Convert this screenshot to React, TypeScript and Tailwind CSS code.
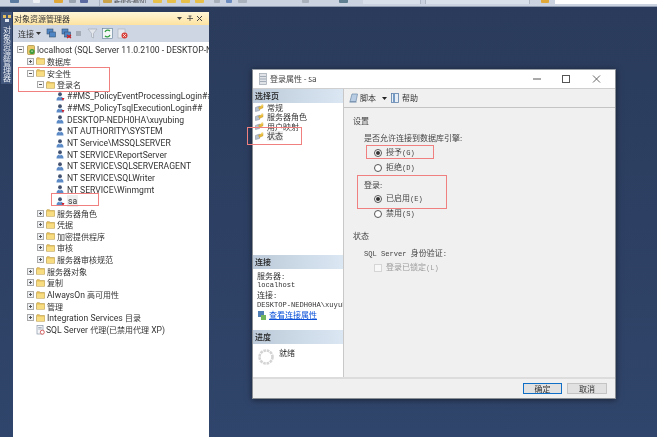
import React from "react";

const cjk = /([\u3000-\u9fff\uff00-\uffef]+)/;

function T({ text, latin, han }: { text: string; latin: string; han: string }) {
  return (
    <>
      {text.split(cjk).map((part, i) =>
        part === "" ? null : (
          <span key={i} className={cjk.test(part) ? han : latin}>
            {part}
          </span>
        )
      )}
    </>
  );
}

const TreeText = ({ text }: { text: string }) => (
  <T text={text} latin="font-['Roboto'] text-[8.6px]" han="font-['Noto_Sans_CJK_SC'] text-[8px]" />
);
const DlgText = ({ text }: { text: string }) => (
  <span className="text-[8px] leading-[8.5px]">
    <T text={text} latin="font-['Liberation_Mono'] text-[7.1px]" han="font-['Noto_Sans_CJK_SC'] text-[8px]" />
  </span>
);

function Expander({ open }: { open?: boolean }) {
  return (
    <svg width="7" height="7" viewBox="0 0 7 7" className="shrink-0">
      <rect x="0.5" y="0.5" width="6" height="6" fill={open ? "#fafafa" : "#eef1f6"} stroke="#a9a9a9" />
      <path d={open ? "M2 3.5h3" : "M2 3.5h3M3.5 2v3"} stroke="#555" strokeWidth="1" />
    </svg>
  );
}

function Folder() {
  return (
    <svg width="9" height="8" viewBox="0 0 9 8" className="shrink-0">
      <path d="M0.5 1.5L1 0.7h2.5l.7 .8h4.3v5.8H0.5z" fill="#e8c25a" stroke="#b89a4a" strokeWidth="0.6" />
      <rect x="1" y="2.6" width="7.2" height="4.4" fill="#f7dc82" />
    </svg>
  );
}

function User({ warn }: { warn?: boolean }) {
  return (
    <svg width="9" height="9" viewBox="0 0 9 9" className="shrink-0">
      <circle cx="4" cy="2.2" r="1.9" fill="#40506e" />
      <path d="M0.5 8.5c0-3 1.5-4 3.5-4s3.5 1 3.5 4z" fill="#5b8ac6" />
      <path d="M3.2 4.6L4 6l.8-1.4z" fill="#e8eef8" />
      {warn && <path d="M5.5 6h3L7 8.8z" fill="#d0202a" />}
    </svg>
  );
}

function ServerIcon() {
  return (
    <svg width="10" height="10" viewBox="0 0 10 10" className="shrink-0">
      <rect x="1.5" y="0.5" width="7" height="9" rx="1" fill="#e9c86a" stroke="#a58a3c" strokeWidth="0.7" />
      <circle cx="6" cy="6.5" r="2.6" fill="#3f9d3c" />
      <path d="M5 6.5l1-1.2 1 1.2z" fill="#fff" />
    </svg>
  );
}

function AgentIcon() {
  return (
    <svg width="9" height="10" viewBox="0 0 9 10" className="shrink-0">
      <rect x="1" y="0.5" width="6" height="8.5" fill="#f4f6f9" stroke="#8b97a8" strokeWidth="0.7" />
      <path d="M2.2 2.5h3.5M2.2 4h3.5" stroke="#8b97a8" strokeWidth="0.7" />
      <circle cx="6.3" cy="7.2" r="2" fill="#fff" stroke="#d04040" strokeWidth="0.8" />
    </svg>
  );
}

function PageIcon() {
  return (
    <svg width="9" height="8" viewBox="0 0 9 8" className="shrink-0">
      <path d="M0.5 3.5L4.5 2v4.5L0.5 7.5z" fill="#b7c2d0" stroke="#7d8796" strokeWidth="0.5" />
      <path d="M3.5 3.5L8 0.8v3L4.5 5.5z" fill="#e9b93a" stroke="#b78a1e" strokeWidth="0.4" />
      <circle cx="7" cy="1.5" r="1" fill="#f7d870" />
    </svg>
  );
}

type Row = { text: string; level: 0 | 1 | 2 | 3; kind: "server" | "open" | "closed" | "user" | "warn" | "agent" };

const rows: Row[] = [
  { text: "localhost (SQL Server 11.0.2100 - DESKTOP-NEDH0HA\\xuyubing)", level: 0, kind: "server" },
  { text: "数据库", level: 1, kind: "closed" },
  { text: "安全性", level: 1, kind: "open" },
  { text: "登录名", level: 2, kind: "open" },
  { text: "##MS_PolicyEventProcessingLogin##", level: 3, kind: "warn" },
  { text: "##MS_PolicyTsqlExecutionLogin##", level: 3, kind: "warn" },
  { text: "DESKTOP-NEDH0HA\\xuyubing", level: 3, kind: "user" },
  { text: "NT AUTHORITY\\SYSTEM", level: 3, kind: "user" },
  { text: "NT Service\\MSSQLSERVER", level: 3, kind: "user" },
  { text: "NT SERVICE\\ReportServer", level: 3, kind: "user" },
  { text: "NT SERVICE\\SQLSERVERAGENT", level: 3, kind: "user" },
  { text: "NT SERVICE\\SQLWriter", level: 3, kind: "user" },
  { text: "NT SERVICE\\Winmgmt", level: 3, kind: "user" },
  { text: "sa", level: 3, kind: "warn" },
  { text: "服务器角色", level: 2, kind: "closed" },
  { text: "凭据", level: 2, kind: "closed" },
  { text: "加密提供程序", level: 2, kind: "closed" },
  { text: "审核", level: 2, kind: "closed" },
  { text: "服务器审核规范", level: 2, kind: "closed" },
  { text: "服务器对象", level: 1, kind: "closed" },
  { text: "复制", level: 1, kind: "closed" },
  { text: "AlwaysOn 高可用性", level: 1, kind: "closed" },
  { text: "管理", level: 1, kind: "closed" },
  { text: "Integration Services 目录", level: 1, kind: "closed" },
  { text: "SQL Server 代理(已禁用代理 XP)", level: 1, kind: "agent" },
];

const indent = ["pl-[4px]", "pl-[14px]", "pl-[24px]", "pl-[43px]"];

function TreeRow({ row }: { row: Row }) {
  const leaf = row.kind === "user" || row.kind === "warn";
  return (
    <div className={`h-[11.67px] flex items-center whitespace-nowrap text-[#333] text-[9px] leading-[11px] ${indent[row.level]}`}>
      {row.kind === "server" && (
        <div className="flex items-center gap-[2px] mr-[1px]">
          <Expander open />
          <ServerIcon />
        </div>
      )}
      {(row.kind === "open" || row.kind === "closed") && (
        <div className="flex items-center gap-[2px] mr-[2px]">
          <Expander open={row.kind === "open"} />
          <Folder />
        </div>
      )}
      {row.kind === "agent" && (
        <div className="flex items-center ml-[9px] mr-[1px]">
          <AgentIcon />
        </div>
      )}
      {leaf && (
        <div className="mr-[2px]">
          <User warn={row.kind === "warn"} />
        </div>
      )}
      <span className={row.text === "sa" ? "bg-[#eeeeee] px-[1px]" : ""}>
        <TreeText text={row.text} />
      </span>
    </div>
  );
}

function ToolIcon({ color, badge }: { color: string; badge?: string }) {
  return (
    <svg width="11" height="11" viewBox="0 0 11 11">
      <rect x="1" y="1" width="6" height="5" fill={color} stroke="#35506f" strokeWidth="0.6" />
      <rect x="3.5" y="4" width="6" height="5" fill={color} stroke="#35506f" strokeWidth="0.6" />
      {badge && <path d="M6 7l4 3M10 7l-4 3" stroke={badge} strokeWidth="1.4" />}
    </svg>
  );
}

function Radio({ checked }: { checked?: boolean }) {
  return (
    <span className="w-[8px] h-[8px] rounded-full border border-[#555] bg-white flex items-center justify-center shrink-0">
      {checked && <span className="w-[4px] h-[4px] rounded-full bg-[#333]" />}
    </span>
  );
}

function PaneHead({ title }: { title: string }) {
  return (
    <div className="h-[14px] shrink-0 flex items-center pl-[2px] bg-gradient-to-r from-[#bccad9] to-[#dbe7f3] text-[#222] font-['Noto_Sans_CJK_SC'] text-[8px] leading-[10px] font-medium">
      {title}
    </div>
  );
}

function TopIcon({ w, className }: { w: string; className: string }) {
  return <span className={`block h-[3px] rounded-b-[1px] ${w} ${className}`} />;
}

export default function App() {
  return (
    <div className="relative w-[657px] h-[437px] overflow-hidden flex flex-col bg-gradient-to-b from-[#2a3b5b] to-[#30456b] blur-[0.3px]">
      {/* main toolbar clipped at the top */}
      <div className="h-[7px] shrink-0 flex items-start bg-[#cbd3e1] border-b border-[#8e9bb0]">
        <div className="flex items-start gap-[14px] pl-[10px] pt-0">
          <TopIcon w="w-[9px]" className="bg-[#5a7aa0]" />
          <TopIcon w="w-[7px]" className="bg-[#eef1f5]" />
          <TopIcon w="w-[9px]" className="bg-[#e0a838]" />
        </div>
        <div className="flex items-start gap-[4px] ml-[6px]">
          <TopIcon w="w-[7px]" className="bg-[#9aa3b0]" />
          <TopIcon w="w-[8px]" className="bg-[#5a6aa0]" />
        </div>
        <span className="ml-[11px] w-px h-[6px] bg-[#a8b2c2]" />
        <TopIcon w="w-[9px] ml-[3px]" className="bg-[#c9a24a]" />
        <span className="ml-[2px] text-[6px] leading-[3px] h-[3px] overflow-hidden font-['Noto_Sans_CJK_SC'] text-[#444]">新建查询(N)</span>
        <div className="flex items-start gap-[5px] ml-[7px]">
          <TopIcon w="w-[9px]" className="bg-[#e6c04a]" />
          <TopIcon w="w-[9px]" className="bg-[#e6c04a]" />
          <TopIcon w="w-[9px]" className="bg-[#e6c04a]" />
          <TopIcon w="w-[9px]" className="bg-[#e6c04a]" />
        </div>
        <div className="flex items-start gap-[6px] ml-[10px]">
          <TopIcon w="w-[6px]" className="bg-[#a8b0bc]" />
          <TopIcon w="w-[6px]" className="bg-[#6c8cc0]" />
          <TopIcon w="w-[9px]" className="bg-[#aab2be]" />
        </div>
        <div className="flex items-start gap-[30px] ml-[55px]">
          <TopIcon w="w-[7px]" className="bg-[#a8b0bc]" />
          <TopIcon w="w-[9px]" className="bg-[#5f7f90]" />
        </div>
        <div className="w-[58px] h-[4px] bg-[#d9e0ea] border-r border-[#aeb7c6] ml-[15px]" />
        <div className="w-[105px] h-[4px] bg-[#d9e0ea] border-x border-[#aeb7c6] ml-[4px]" />
        <TopIcon w="w-[8px] ml-[11px]" className="bg-[#e0a838]" />
        <div className="flex-1 h-[4px] bg-white ml-[6px]" />
      </div>

      <div className="flex-1 flex min-h-0 pt-[5px]">
        {/* collapsed side tab */}
        <div className="w-[13px] shrink-0 pl-px">
          <div className="w-[11px] h-[72px] bg-[#42557a] flex flex-col items-center pt-[2px]">
            <svg width="10" height="9" viewBox="0 0 10 9" className="shrink-0">
              <path d="M1 1h3v3H1zM6 1h3v3H6z" fill="#e6c060" />
              <path d="M3 5h4v3H3z" fill="#dfe6f0" />
            </svg>
            <span className="mt-[3px] [writing-mode:vertical-rl] text-[#e8edf5] font-['Noto_Sans_CJK_SC'] text-[8px] leading-[10px]">
              对象资源管理器
            </span>
          </div>
        </div>

        {/* object explorer */}
        <div className="w-[196px] shrink-0 flex flex-col bg-white">
          <div className="h-[13px] shrink-0 flex items-center pl-px bg-gradient-to-b from-[#fff6d8] to-[#fde3a0] text-[#333] font-['Noto_Sans_CJK_SC'] text-[8px] leading-[10px]">
            <span className="flex-1">对象资源管理器</span>
            <svg width="28" height="9" viewBox="0 0 28 9" className="mr-[5px] text-[#444]">
              <path d="M1 3h5L3.5 6z" fill="currentColor" />
              <path d="M11 4.5h6M14 2v5M12.5 2h3" stroke="currentColor" strokeWidth="0.8" fill="none" />
              <path d="M21 2l5 5M26 2l-5 5" stroke="currentColor" strokeWidth="1" />
            </svg>
          </div>
          <div className="h-[17px] shrink-0 flex items-center pl-[5px] bg-[#ced6e4] text-[#333]">
            <span className="font-['Noto_Sans_CJK_SC'] text-[8px] leading-[10px]">连接</span>
            <svg width="5" height="3" viewBox="0 0 5 3" className="ml-[2px]">
              <path d="M0 0h5L2.5 3z" fill="#333" />
            </svg>
            <div className="flex items-center ml-[5px] gap-[4px]">
              <ToolIcon color="#4f86c6" />
              <ToolIcon color="#4f86c6" badge="#d02020" />
              <span className="w-[5px] h-[5px] bg-[#a5adb9]" />
              <svg width="11" height="11" viewBox="0 0 11 11" className="ml-[2px]">
                <path d="M1 1h9L6.5 5.5V10l-2-1V5.5z" fill="#e3e6ea" stroke="#a5adb9" strokeWidth="0.7" />
              </svg>
              <svg width="11" height="11" viewBox="0 0 11 11">
                <rect x="0.5" y="0.5" width="10" height="10" fill="#f4f6f8" stroke="#5d7d94" strokeWidth="0.6" />
                <path d="M3 4a3 3 0 0 1 5-1M8 7a3 3 0 0 1-5 1" stroke="#2f9d3f" strokeWidth="1.2" fill="none" />
              </svg>
              <svg width="11" height="11" viewBox="0 0 11 11">
                <rect x="1" y="1" width="7" height="9" fill="#e6e9ee" stroke="#a5adb9" strokeWidth="0.6" />
                <circle cx="7.5" cy="7.5" r="3" fill="#d8403a" />
                <path d="M6 6l3 3M9 6l-3 3" stroke="#fff" strokeWidth="0.7" />
              </svg>
            </div>
          </div>
          <div className="flex-1 pt-[2px] overflow-hidden">
            {rows.map((r) => (
              <TreeRow key={r.text} row={r} />
            ))}
          </div>
        </div>
      </div>

      {/* dialog window */}
      <div className="absolute left-[252px] top-[69px] w-[364px] h-[330px] flex flex-col bg-[#f0f0f0] shadow-[0_1px_6px_rgba(0,0,0,0.5)] border-x border-b border-[#8a8f96] text-[#333]">
        <div className="h-[19px] shrink-0 flex items-center bg-white pl-[6px] border-t border-[#9aa0a8]">
          <svg width="8" height="12" viewBox="0 0 8 12">
            <rect x="0.5" y="0.5" width="7" height="11" fill="#dfe3e8" stroke="#9aa3ad" strokeWidth="0.7" />
            <path d="M1 3.5h6M1 6h6M1 8.5h6" stroke="#8a93a0" strokeWidth="0.7" />
          </svg>
          <span className="ml-[3px] flex-1 font-['Noto_Sans_CJK_SC'] text-[8px] leading-[10px] text-[#444]">
            登录属性 - sa
          </span>
          <svg width="72" height="10" viewBox="0 0 72 10" className="mr-[10px]">
            <path d="M0 5h8" stroke="#555" strokeWidth="1" />
            <rect x="29.5" y="1.5" width="7" height="7" fill="none" stroke="#555" strokeWidth="1" />
            <path d="M60 1.5l7 7M67 1.5l-7 7" stroke="#555" strokeWidth="0.9" />
          </svg>
        </div>

        <div className="flex-1 flex min-h-0 border-t border-[#cfcfcf]">
          {/* left pane */}
          <div className="w-[91px] shrink-0 flex flex-col bg-white border-r border-[#c8c8c8] overflow-hidden">
            <PaneHead title="选择页" />
            <div className="pl-[2px] font-['Noto_Sans_CJK_SC'] text-[8px] leading-[9.4px]">
              {["常规", "服务器角色", "用户映射", "状态"].map((t) => (
                <div key={t} className="flex items-center gap-[3px] h-[9.4px]">
                  <PageIcon />
                  <span className={t === "状态" ? "bg-[#eeeeee]" : ""}>{t}</span>
                </div>
              ))}
            </div>
            <div className="mt-[114px]">
              <PaneHead title="连接" />
            </div>
            <div className="h-[61px] shrink-0 pl-[4px] pt-[3.5px] whitespace-nowrap text-[#333] text-[8px] leading-[8.5px]">
              <div className="h-[8.5px] flex items-center"><DlgText text="服务器:" /></div>
              <div className="h-[8.5px] flex items-center"><DlgText text="localhost" /></div>
              <div className="h-[8.5px] flex items-center mt-[2.5px]"><DlgText text="连接:" /></div>
              <div className="h-[8.5px] flex items-center"><DlgText text="DESKTOP-NEDH0HA\xuyubing" /></div>
              <div className="h-[10px] flex items-center gap-[3px] mt-[1.5px] pl-px">
                <svg width="8" height="9" viewBox="0 0 8 9" className="shrink-0">
                  <rect x="0" y="0" width="6" height="6" fill="#4f7fb5" />
                  <rect x="3" y="4" width="5" height="5" fill="#74b65c" />
                </svg>
                <span className="text-[#0a50d8] underline font-['Noto_Sans_CJK_SC'] text-[8px] leading-[10px]">查看连接属性</span>
              </div>
            </div>
            <PaneHead title="进度" />
            <div className="flex items-start pl-[5px] pt-[4px] font-['Noto_Sans_CJK_SC'] text-[8px] leading-[10px]">
              <svg width="16" height="16" viewBox="0 0 16 16" className="shrink-0 mt-[1px]">
                <circle cx="8" cy="8" r="6.5" fill="none" stroke="#d4d4d4" strokeWidth="2.6" strokeDasharray="2.6 0.8" />
              </svg>
              <span className="ml-[5px]">就绪</span>
            </div>
          </div>

          {/* right pane */}
          <div className="flex-1 flex flex-col min-w-0">
            <div className="h-[19px] shrink-0 flex items-center pl-[5px] border-b border-[#c4c4c4] font-['Noto_Sans_CJK_SC'] text-[8px] leading-[10px]">
              <svg width="9" height="10" viewBox="0 0 9 10">
                <path d="M1 8.5L3 1h5.5L7 8.5z" fill="#b8cde4" stroke="#6e8aa8" strokeWidth="0.7" />
                <path d="M0.5 9h7" stroke="#6e8aa8" />
              </svg>
              <span className="ml-[2px]">脚本</span>
              <svg width="5" height="3" viewBox="0 0 5 3" className="ml-[6px]">
                <path d="M0 0h5L2.5 3z" fill="#222" />
              </svg>
              <svg width="9" height="10" viewBox="0 0 9 10" className="ml-[4px]">
                <rect x="0.5" y="0.5" width="7" height="9" fill="#e8eef6" stroke="#5d7fa8" strokeWidth="0.8" />
                <path d="M3 1v8" stroke="#4f7fb5" strokeWidth="1.5" />
              </svg>
              <span className="ml-[2px]">帮助</span>
            </div>
            <div className="flex-1 pl-[9px] pt-[7px] text-[#444] font-['Noto_Sans_CJK_SC'] text-[8px] leading-[12px] whitespace-nowrap">
              <div>设置</div>
              <div className="pl-[11px] mt-[5px]">是否允许连接到数据库引擎:</div>
              <div className="pl-[21px] mt-[2px] flex items-center gap-[4px] h-[14px]"><Radio checked /><DlgText text="授予(G)" /></div>
              <div className="pl-[21px] mt-[1px] flex items-center gap-[4px] h-[14px]"><Radio /><DlgText text="拒绝(D)" /></div>
              <div className="pl-[11px] mt-[4px]">登录:</div>
              <div className="pl-[21px] mt-[1px] flex items-center gap-[4px] h-[14px]"><Radio checked /><DlgText text="已启用(E)" /></div>
              <div className="pl-[21px] mt-[1px] flex items-center gap-[4px] h-[14px]"><Radio /><DlgText text="禁用(S)" /></div>
              <div className="mt-[9px]">状态</div>
              <div className="pl-[11px] mt-[5px]"><DlgText text="SQL Server 身份验证:" /></div>
              <div className="pl-[21px] mt-[2px] flex items-center gap-[4px] h-[14px] opacity-50">
                <span className="w-[8px] h-[8px] bg-white border border-[#bbbbbb]" />
                <DlgText text="登录已锁定(L)" />
              </div>
            </div>
          </div>
        </div>

        <div className="h-[21px] shrink-0 flex items-center justify-end gap-[5px] pr-[8px] border-t-2 border-[#dcdcdc] font-['Noto_Sans_CJK_SC'] text-[8px]">
          <button className="w-[39px] h-[11px] flex items-center justify-center bg-[#e1e1e1] border border-[#0f6fc6] leading-none">确定</button>
          <button className="w-[40px] h-[11px] flex items-center justify-center bg-[#e1e1e1] border border-[#c4c4c4] leading-none">取消</button>
        </div>
      </div>

      {/* red annotation boxes drawn over the screenshot */}
      <div className="absolute left-[18px] top-[67px] w-[92px] h-[25px] border border-[#f08080]" />
      <div className="absolute left-[51px] top-[193px] w-[48px] h-[13px] border border-[#f08080]" />
      <div className="absolute left-[247px] top-[127px] w-[55px] h-[18px] border border-[#f08080]" />
      <div className="absolute left-[366px] top-[145px] w-[68px] h-[14px] border border-[#f08080]" />
      <div className="absolute left-[357px] top-[175px] w-[90px] h-[34px] border border-[#f08080]" />
    </div>
  );
}
